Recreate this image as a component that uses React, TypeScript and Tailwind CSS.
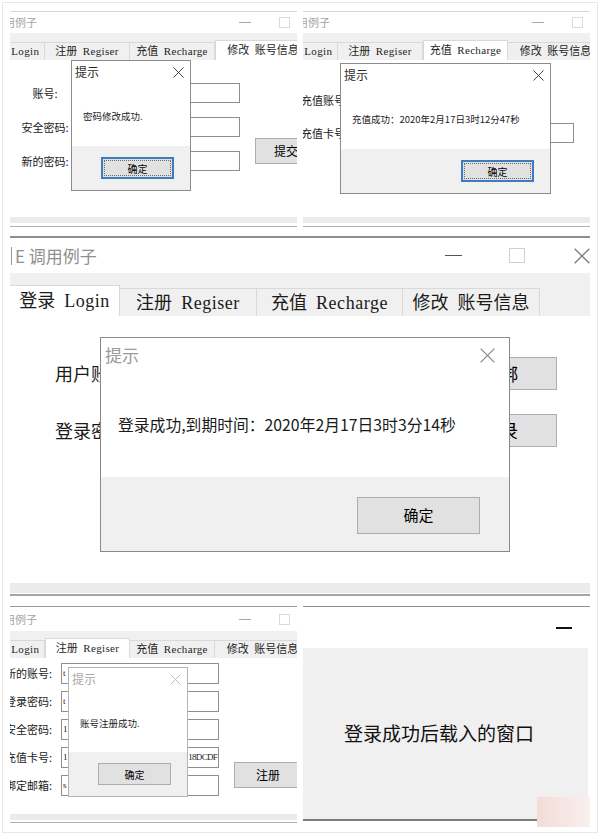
import React from "react";

const sans = "font-['Noto_Sans_CJK_SC',sans-serif]";
const mono = "font-mono tracking-[-0.1em]";
const serif = "font-['Liberation_Serif',serif] tracking-[0.03em]";

type TabDef = { cn: string; en: string; latin: boolean; w: string };

const smallTabs: TabDef[] = [
  { cn: "登录", en: "Login", latin: true, w: "w-[66px]" },
  { cn: "注册", en: "Regiser", latin: true, w: "w-[85px]" },
  { cn: "充值", en: "Recharge", latin: true, w: "w-[85px]" },
  { cn: "修改", en: "账号信息", latin: false, w: "w-[96px]" },
];

const bigTabs: TabDef[] = [
  { cn: "登录", en: "Login", latin: true, w: "w-[110px]" },
  { cn: "注册", en: "Regiser", latin: true, w: "w-[137px]" },
  { cn: "充值", en: "Recharge", latin: true, w: "w-[146px]" },
  { cn: "修改", en: "账号信息", latin: false, w: "w-[137px]" },
];

function XIcon({ className, stroke }: { className: string; stroke: string }) {
  return (
    <svg viewBox="0 0 12 12" className={className} fill="none">
      <path d="M0.5 0.5L11.5 11.5M11.5 0.5L0.5 11.5" stroke={stroke} strokeWidth="1" />
    </svg>
  );
}

function TabLabel({ t }: { t: TabDef }) {
  return (
    <span className="whitespace-nowrap">
      {t.cn}
      <span className={mono}>&nbsp;</span>
      {t.latin ? <span className={serif}>{t.en}</span> : t.en}
    </span>
  );
}

function SmallTitle({ h }: { h: string }) {
  return (
    <div className={`flex items-center ${h}`}>
      <span className="-ml-[26px] shrink-0 whitespace-nowrap text-[11px] text-[#a3a3a3]">E 调用例子</span>
      <span className="ml-auto h-px w-[12px] bg-[#a8a8a8]" />
      <span className="ml-[28px] mr-[7px] h-[11px] w-[11px] border border-[#dadada]" />
    </div>
  );
}

function SmallTabs({ active }: { active: number }) {
  return (
    <div className="flex h-[27px] items-end bg-[#f0f0f0]">
      <div className="-ml-[31px] flex items-end">
        {smallTabs.map((t, i) => (
          <div
            key={t.cn}
            className={`${t.w} flex shrink-0 items-center justify-center text-[11px] text-[#1e1e1e] ${
              i === active
                ? "h-[20px] border-x border-t border-[#d9d9d9] bg-white"
                : "h-[18px] border-r border-t border-[#d9d9d9] bg-[#f0f0f0]"
            }`}
          >
            <TabLabel t={t} />
          </div>
        ))}
      </div>
    </div>
  );
}

function OkButton({ focused, cls, text }: { focused: boolean; cls: string; text: string }) {
  if (focused) {
    return (
      <div className={`${cls} border-2 border-[#3f7bbf] bg-[#e1e1e1] p-px`}>
        <div className="flex h-full items-center justify-center border border-dotted border-[#6a6a6a]">{text}</div>
      </div>
    );
  }
  return (
    <div className={`${cls} flex items-center justify-center border border-[#adadad] bg-[#e1e1e1]`}>{text}</div>
  );
}

function SmallDialog({
  cls,
  msg,
  active,
  focused,
}: {
  cls: string;
  msg: string;
  active: boolean;
  focused: boolean;
}) {
  return (
    <div
      className={`absolute flex flex-col border bg-white ${cls} ${
        active ? "border-[#8c8c8c]" : "border-[#b4b4b4]"
      }`}
    >
      <div className="flex h-[22px] shrink-0 items-center justify-between pl-[3px] pr-[6px]">
        <span className={`text-[12px] ${active ? "text-[#2b2b2b]" : "text-[#a8a8a8]"}`}>提示</span>
        <XIcon className="h-[11px] w-[11px]" stroke={active ? "#333333" : "#b8b8b8"} />
      </div>
      <div className="flex-1 whitespace-nowrap pl-[11px] pt-[27px] text-[9.5px] leading-[12px] text-[#222]">
        {msg}
      </div>
      <div className="flex h-[44px] shrink-0 justify-end bg-[#f0f0f0] pr-[16px] pt-[11px]">
        <OkButton focused={focused} cls="h-[22px] w-[73px] text-[10px]" text="确定" />
      </div>
    </div>
  );
}

function TopLeft() {
  return (
    <div className="relative h-[217px] w-[287px] shrink-0 overflow-hidden border-t border-[#d6d6d6]">
      <SmallTitle h="h-[21px]" />
      <SmallTabs active={3} />
      <div className="flex h-[156px] bg-white pt-[23px]">
        <div className="flex flex-col gap-[14px]">
          {["账号:", "安全密码:", "新的密码:"].map((l) => (
            <div key={l} className="flex h-[20px] items-center">
              <span className="ml-[5px] w-[60px] shrink-0 text-center text-[11px] text-[#1a1a1a]">{l}</span>
              <span className="ml-[35px] h-[20px] w-[130px] shrink-0 border border-[#8f8f8f]" />
            </div>
          ))}
        </div>
        <div className="ml-[15px] mt-[55px] flex h-[26px] w-[62px] shrink-0 items-center justify-center border border-[#adadad] bg-[#e1e1e1] text-[12px]">
          提交
        </div>
      </div>
      <div className="mt-[1px] h-[6px] bg-[#ebebeb]" />
      <div className="mt-[3px] h-px bg-[#b0b0b0]" />
      <SmallDialog cls="left-[61px] top-[48px] h-[131px] w-[120px]" msg="密码修改成功." active focused />
    </div>
  );
}

function TopRight() {
  return (
    <div className="relative h-[217px] w-[287px] shrink-0 overflow-hidden border-t border-[#d6d6d6]">
      <SmallTitle h="h-[21px]" />
      <SmallTabs active={2} />
      <div className="flex h-[156px] flex-col bg-white pt-[30px]">
        <div className="flex h-[20px] items-center">
          <span className="-ml-[2px] text-[11px] text-[#1a1a1a]">充值账号</span>
        </div>
        <div className="mt-[13px] flex h-[20px] items-center">
          <span className="-ml-[2px] text-[11px] text-[#1a1a1a]">充值卡号</span>
          <span className="ml-auto mr-[16px] h-[20px] w-[140px] border border-[#8f8f8f]" />
        </div>
      </div>
      <div className="mt-[1px] h-[6px] bg-[#ebebeb]" />
      <div className="mt-[3px] h-px bg-[#b0b0b0]" />
      <SmallDialog
        cls="left-[37px] top-[51px] h-[131px] w-[211px]"
        msg="充值成功：2020年2月17日3时12分47秒"
        active
        focused
      />
    </div>
  );
}

function Middle() {
  return (
    <div className="relative mt-[8px] h-[360px] border-t-2 border-[#8e8e8e]">
      <div className="flex h-[35px] items-center">
        <span className="ml-px h-[18px] w-px bg-[#9a9a9a]" />
        <span className="ml-[3px] text-[17px] text-[#8f8f8f]">E 调用例子</span>
        <span className="ml-auto h-px w-[17px] bg-[#555]" />
        <span className="ml-[47px] h-[15px] w-[16px] border border-[#cfcfcf]" />
        <XIcon className="ml-[49px] h-[16px] w-[16px]" stroke="#7a7a7a" />
      </div>
      <div className="flex h-[43px] items-end bg-[#f0f0f0]">
        {bigTabs.map((t, i) => (
          <div
            key={t.cn}
            className={`${t.w} flex shrink-0 items-center justify-center text-[18px] text-[#1a1a1a] ${
              i === 0
                ? "h-[31px] border-r border-t border-[#d9d9d9] bg-white"
                : "h-[28px] border-r border-t border-[#d9d9d9] bg-[#f0f0f0]"
            }`}
          >
            <TabLabel t={t} />
          </div>
        ))}
      </div>
      <div className="flex h-[264px] flex-col gap-[24px] bg-white pt-[41px]">
        {[
          ["用户账号：", "解绑"],
          ["登录密码：", "登录"],
        ].map(([l, b]) => (
          <div key={l} className="flex h-[33px] items-center">
            <span className="ml-[45px] text-[18px] text-[#1a1a1a]">{l}</span>
            <span className="ml-auto mr-[33px] flex h-[33px] w-[114px] items-center justify-center border border-[#adadad] bg-[#e1e1e1] text-[18px]">
              {b}
            </span>
          </div>
        ))}
      </div>
      <div className="mt-[3px] h-[10px] bg-[#ebebeb]" />
      <div className="mt-px h-[2px] bg-[#a5a5a5]" />

      <div className="absolute left-[90px] top-[99px] flex h-[215px] w-[410px] flex-col border border-[#8a8a8a] bg-white">
        <div className="flex h-[34px] shrink-0 items-center justify-between pl-[4px] pr-[14px]">
          <span className="text-[17px] text-[#9b9b9b]">提示</span>
          <XIcon className="h-[15px] w-[15px]" stroke="#8a8a8a" />
        </div>
        <div className="flex-1 whitespace-nowrap pl-[17px] pt-[43px] text-[15.8px] leading-[20px] text-[#1a1a1a]">
          登录成功,到期时间：2020年2月17日3时3分14秒
        </div>
        <div className="flex h-[74px] shrink-0 justify-end bg-[#f0f0f0] pr-[29px] pt-[20px]">
          <OkButton focused={false} cls="h-[37px] w-[123px] text-[15px]" text="确定" />
        </div>
      </div>
    </div>
  );
}

// only the ends of each value show beside the dialog
const regRows = [
  ["新的账号:", "t", ""],
  ["登录密码:", "t", ""],
  ["安全密码:", "1", ""],
  ["充值卡号:", "1", "18DCDF"],
  ["绑定邮箱:", "s", ""],
];

function BottomLeft() {
  return (
    <div className="relative h-[218px] w-[287px] shrink-0 overflow-hidden border-t border-[#9a9a9a]">
      <SmallTitle h="h-[24px]" />
      <SmallTabs active={1} />
      <div className="flex h-[154px] bg-white pt-[5px]">
        <div className="flex flex-col gap-[7px]">
          {regRows.map(([l, a, b]) => (
            <div key={l} className="flex h-[21px] items-center">
              <span className="-ml-[6px] w-[48px] shrink-0 whitespace-nowrap text-right text-[11px] text-[#1a1a1a]">
                {l}
              </span>
              <span className="ml-[9px] flex h-[21px] w-[158px] shrink-0 items-center justify-between overflow-hidden whitespace-nowrap border border-[#8f8f8f] px-px font-['Liberation_Serif',serif] text-[9px] tracking-[-0.08em] text-[#1a1a1a]">
                <span>{a}</span>
                <span>{b}</span>
              </span>
            </div>
          ))}
        </div>
        <div className="ml-[15px] mt-[99px] flex h-[26px] w-[68px] shrink-0 items-center justify-center border border-[#adadad] bg-[#e1e1e1] text-[12px]">
          注册
        </div>
      </div>
      <div className="mt-[2px] h-[6px] bg-[#ebebeb]" />
      <div className="mt-[2px] h-px bg-[#b0b0b0]" />
      <SmallDialog
        cls="left-[58px] top-[60px] h-[130px] w-[120px]"
        msg="账号注册成功."
        active={false}
        focused={false}
      />
    </div>
  );
}

function BottomRight() {
  return (
    <div className="relative h-[218px] w-[287px] shrink-0 border-t border-[#8f8f8f]">
      <div className="flex h-[41px] items-center justify-end pr-[18px]">
        <span className="h-[2px] w-[16px] bg-[#111]" />
      </div>
      <div className="mr-[2px] flex h-[171px] items-center justify-center bg-[#f0f0f0] pr-[13px] text-[19px] text-[#111]">
        登录成功后载入的窗口
      </div>
      <div className="mr-[25px] h-[2px] bg-[#7d7d7d]" />
      <div className="absolute left-[234px] top-[190px] h-[30px] w-[53px] bg-gradient-to-r from-[#f3dcd8] to-[#f9efed]" />
    </div>
  );
}

export default function App() {
  return (
    <div className="h-[835px] w-[600px] bg-white p-[2px]">
      <div className={`h-[831px] border border-[#e8e8e8] px-[7px] pt-[8px] ${sans}`}>
        <div className="flex gap-[6px]">
          <TopLeft />
          <TopRight />
        </div>
        <Middle />
        <div className="mt-[10px] flex gap-[6px]">
          <BottomLeft />
          <BottomRight />
        </div>
      </div>
    </div>
  );
}
